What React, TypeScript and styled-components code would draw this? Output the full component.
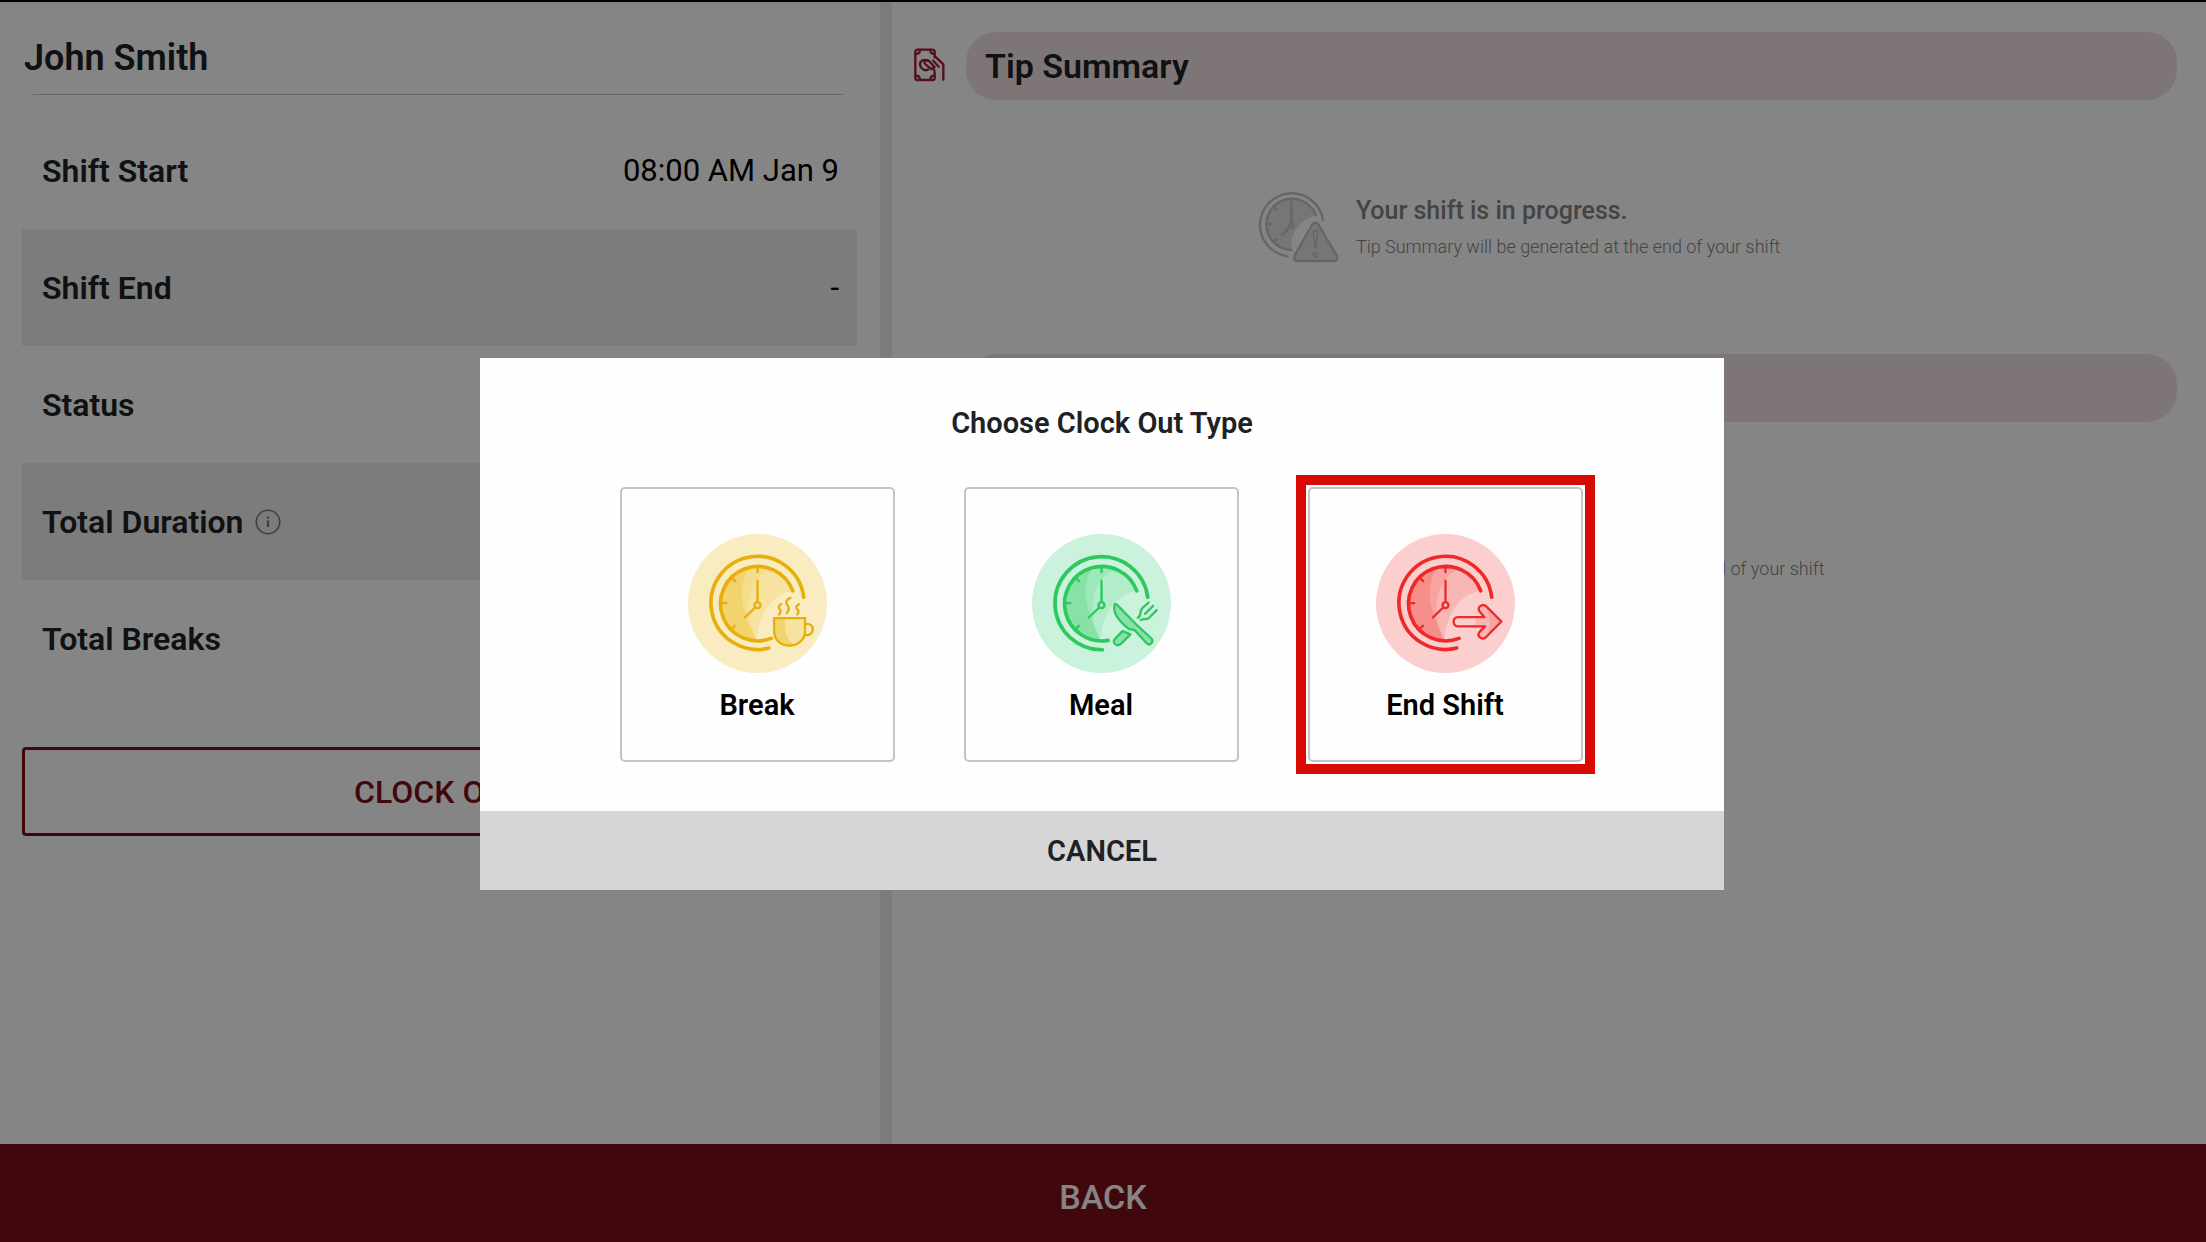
import React from "react";
import styled, { createGlobalStyle } from "styled-components";

const GlobalStyle = createGlobalStyle`
  * { box-sizing: border-box; }
  body { margin: 0; font-family: Roboto, "Liberation Sans", sans-serif; color: #202124; }
  h1, h2, h3, p, dl, dt, dd { margin: 0; }
  button { font-family: inherit; cursor: pointer; }
`;

const maroon = "#7b1117";

const Screen = styled.div`
  display: flex;
  flex-direction: column;
  min-height: 100vh;
  border-top: 2px solid #000;
  background: #fff;
`;

const Panes = styled.main`
  flex: 1;
  display: grid;
  grid-template-columns: 880fr 12px 1314fr;
`;

const Divider = styled.div`
  background: #ededed;
`;

const ShiftPane = styled.section`
  padding: 33px 23px 0 22px;
`;

const EmployeeName = styled.h1`
  font-size: 36px;
  font-weight: 600;
  line-height: 46px;
  padding-left: 2px;
`;

const Rule = styled.hr`
  height: 1px;
  margin: 13px 14px 17px 11px;
  border: 0;
  background: #c4c4c4;
`;

const Details = styled.dl`
  margin-bottom: 50px;
`;

const DetailRow = styled.div<{ $shaded?: boolean }>`
  display: flex;
  align-items: center;
  justify-content: space-between;
  min-height: 117px;
  padding: 0 18px 0 20px;
  font-size: 32px;
  background: ${(p) => (p.$shaded ? "#ededed" : "transparent")};
`;

const DetailLabel = styled.dt`
  display: flex;
  align-items: center;
  gap: 12px;
  font-weight: 600;
`;

const DetailValue = styled.dd`
  color: #000;
  font-size: 31px;
`;

const ClockOutButton = styled.button`
  width: 100%;
  height: 89px;
  border: 3px solid ${maroon};
  border-radius: 4px;
  background: #fff;
  color: ${maroon};
  font-size: 32px;
  font-weight: 500;
`;

const SummaryPane = styled.section`
  display: flex;
  flex-direction: column;
  padding: 30px 29px 0 18px;
`;

const SummaryBlock = styled.article`
  min-height: 322px;
`;

const SummaryHeader = styled.header`
  display: flex;
  align-items: center;
  gap: 16px;
`;

const SummaryTitle = styled.h2`
  flex: 1;
  height: 68px;
  padding: 0 19px;
  border-radius: 30px;
  background: #f2e3e3;
  font-size: 34px;
  font-weight: 600;
  line-height: 68px;
`;

const Notice = styled.div`
  display: flex;
  align-items: center;
  gap: 12px;
  margin: 86px 0 0 27.3%;
  color: #838383;
`;

const NoticeTitle = styled.h3`
  font-size: 25px;
  font-weight: 500;
  line-height: 36px;
`;

const NoticeText = styled.p`
  padding-bottom: 2px;
  font-size: 18px;
  font-weight: 300;
  line-height: 36px;
`;

const BackButton = styled.button`
  height: 98px;
  padding: 8px 0 0;
  border: 0;
  background: ${maroon};
  color: #fff;
  font-size: 34px;
  font-weight: 500;
`;

const Overlay = styled.div`
  position: fixed;
  inset: 0;
  display: flex;
  align-items: center;
  justify-content: center;
  padding: 6px 2px 0 0;
  background: rgba(0, 0, 0, 0.48);
`;

const Dialog = styled.div`
  display: flex;
  flex-direction: column;
  width: 90%;
  max-width: 1244px;
  background: #fefefe;
`;

const DialogTitle = styled.h2`
  padding: 45px 0 44px;
  font-size: 29px;
  font-weight: 600;
  line-height: 40px;
  text-align: center;
`;

const Choices = styled.div`
  display: flex;
  justify-content: center;
  gap: 69px;
  padding: 0 2px 49px 0;
`;

const Choice = styled.button<{ $highlighted?: boolean }>`
  display: flex;
  flex-direction: column;
  align-items: center;
  gap: 12px;
  width: 275px;
  height: 275px;
  padding: 45px 0 0;
  border: 2px solid #c4c4c4;
  border-radius: 5px;
  background: #fefefe;
  color: #000;
  font-size: 29px;
  font-weight: 600;
  line-height: 40px;
  position: relative;

  ${(p) =>
    p.$highlighted &&
    `&::after {
      content: "";
      position: absolute;
      inset: -14px;
      border: 10px solid #d90a04;
    }`}
`;

const CancelButton = styled.button`
  height: 79px;
  border: 0;
  background: #d6d6d6;
  color: #202124;
  font-size: 29px;
  font-weight: 600;
`;

const InfoIcon = () => (
  <svg width="26" height="26" viewBox="0 0 26 26" fill="none" stroke="#7c7c7c" aria-hidden="true">
    <circle cx="13" cy="13" r="11.7" strokeWidth="1.6" />
    <path d="M13 11.5V18" strokeWidth="2.4" />
    <path d="M13 7.4V9.6" strokeWidth="2.4" />
  </svg>
);

const TipIcon = () => (
  <svg width="40" height="40" viewBox="30 48 120 120" fill="none" stroke="#a0202b" strokeWidth="7" strokeLinecap="round" strokeLinejoin="round" aria-hidden="true">
    <path d="M104 82V66Q104 59 97 59H53Q46 59 46 66V143Q46 150 53 150H97Q104 150 104 143V128Q104 120 98 113" />
    <path d="M47 72Q60 72 60 60M91 60Q91 72 103 72M47 137Q60 137 60 149M91 149Q91 137 103 137" />
    <path d="M84 92C66 84 56 98 62 110C66 120 76 122 84 119" />
    <path d="M104 112L88 94C80 86 68 94 76 102L94 118" />
    <path d="M106 80L130 103V149M100 92L116 110" />
  </svg>
);

const WarningClockIcon = () => (
  <svg width="88" height="88" viewBox="18 24 264 264" fill="none" stroke="#c4c4c4" strokeWidth="7" strokeLinecap="round" strokeLinejoin="round" aria-hidden="true">
    <path d="M198 112A77 77 0 1 0 124 216C122 160 150 125 198 112Z" fill="#e2e2e2" stroke="none" />
    <path d="M198 112A77 77 0 1 0 125 216" />
    <path d="M219 126A95 95 0 1 0 113 235" />
    <path d="M124 63V76M124 84V134M119 149L97 170M50 138H62M70 86L80 94M70 191L80 183" />
    <circle cx="124" cy="143" r="6" />
    <path d="M186 141Q196 126 206 141L260 232Q266 249 250 249H144Q128 249 134 232Z" fill="#e2e2e2" />
    <path d="M190 165Q189 158 196 158Q204 158 203 165L198 207Q196 212 194 207Z" strokeWidth="5" />
    <circle cx="196" cy="230" r="6" strokeWidth="5" />
  </svg>
);

type Palette = { line: string; disc: string; light: string; mid: string; deep: string };

const yellow: Palette = { line: "#e8ae0c", disc: "#f9ecc1", light: "#f6e3a0", mid: "#f5de8a", deep: "#f1d46e" };
const green: Palette = { line: "#2dc95f", disc: "#cbf2dc", light: "#b1edc8", mid: "#9de8b8", deep: "#88e2a8" };
const red: Palette = { line: "#ef2929", disc: "#fbcfce", light: "#f8b7b5", mid: "#f7a3a0", deep: "#f68e8a" };

type ClockProps = { palette: Palette; shortArc?: boolean; children: React.ReactNode };

const ClockIcon = ({ palette, shortArc, children }: ClockProps) => (
  <svg width="139" height="139" viewBox="52 38 418 418" fill="none" stroke={palette.line} strokeWidth="7" strokeLinecap="round" strokeLinejoin="round" aria-hidden="true">
    <circle cx="261" cy="247" r="209" fill={palette.disc} stroke="none" />
    <g stroke="none">
      <path d="M367 209A112 112 0 1 0 258 358C262 290 300 220 367 209Z" fill={palette.light} />
      <path d="M300 142A112 112 0 1 0 258 358C225 290 215 190 300 142Z" fill={palette.mid} />
      <path d="M236 138A112 112 0 0 0 258 358C215 270 195 200 236 138Z" fill={palette.deep} />
      <path d="M367 209C300 220 262 290 258 358L330 358Z" fill={palette.disc} />
    </g>
    <g strokeWidth="11">
      <path d={shortArc ? "M367 209A112 112 0 1 0 281 358" : "M367 209A112 112 0 1 0 302 352"} />
      <path d={shortArc ? "M400 228A140 140 0 1 0 264 386" : "M400 228A140 140 0 1 0 295 381"} />
    </g>
    <path d="M261 138V153M261 178V243M254 259L223 289M150 246H167M184 170L194 180M182 324L193 314" />
    <circle cx="261" cy="252" r="9" />
    {children}
  </svg>
);

const BreakIcon = () => (
  <ClockIcon palette={yellow}>
    <path d="M311 291H404V330C404 358 380 374 357 374C333 374 311 358 311 330Z" fill={yellow.light} stroke="none" />
    <path d="M311 291H345C338 325 348 355 372 371C335 382 311 358 311 330Z" fill={yellow.deep} stroke="none" />
    <path d="M311 291H404V330C404 358 380 374 357 374C333 374 311 358 311 330Z" strokeLinejoin="miter" />
    <path d="M406 309C434 302 436 347 403 342" />
    <path d="M332 249C321 257 325 261 329 266C333 272 328 277 326 280M360 230C343 240 346 246 352 253C360 262 352 272 349 276M386 249C373 256 378 262 382 266C388 272 382 278 380 280" />
  </ClockIcon>
);

const MealIcon = () => (
  <ClockIcon palette={green} shortArc>
    <path d="M370 290C382 286 374 270 384 261L403 244M416 254L392 278M427 267L404 290C395 298 388 290 379 297" />
    <path d="M324 330L348 340L321 367C309 379 291 367 301 354Z" fill={green.deep} />
    <path d="M300 252C294 277 320 305 344 324C352 326 360 322 368 335L396 366C405 376 419 364 412 353L374 318C352 298 322 264 308 251C304 247 301 248 300 252Z" fill={green.deep} />
  </ClockIcon>
);

const EndShiftIcon = () => (
  <ClockIcon palette={red}>
    <path d="M299 288H378L363 270C354 256 376 244 386 258L429 301L384 347C372 360 354 346 363 333L380 316H299C281 314 281 290 299 288Z" fill={red.disc} stroke="none" />
    <path d="M350 288H378L363 270C355 256 376 244 386 258L429 301L384 347C372 360 354 346 363 333L380 316H346Q356 302 350 288Z" fill={red.light} stroke="none" />
    <path d="M378 254L429 301L384 347C398 312 396 285 378 254Z" fill={red.mid} stroke="none" />
    <path d="M299 288H378L363 270C354 256 376 244 386 258L429 301L384 347C372 360 354 346 363 333L380 316H299C281 314 281 290 299 288Z" />
  </ClockIcon>
);

const ShiftNotice = ({ summary }: { summary: string }) => (
  <Notice>
    <WarningClockIcon />
    <div>
      <NoticeTitle>Your shift is in progress.</NoticeTitle>
      <NoticeText>{summary} will be generated at the end of your shift</NoticeText>
    </div>
  </Notice>
);

const details = [
  { label: "Shift Start", value: "08:00 AM Jan 9" },
  { label: "Shift End", value: "-" },
  { label: "Status", value: "" },
  { label: "Total Duration", value: "", info: true },
  { label: "Total Breaks", value: "" },
];

const summaries = ["Tip Summary", "Earnings Summary"];

const choices = [
  { label: "Break", Icon: BreakIcon },
  { label: "Meal", Icon: MealIcon },
  { label: "End Shift", Icon: EndShiftIcon, highlighted: true },
];

export default function App() {
  return (
    <>
      <GlobalStyle />
      <Screen>
        <Panes>
          <ShiftPane>
            <EmployeeName>John Smith</EmployeeName>
            <Rule />
            <Details>
              {details.map((row, i) => (
                <DetailRow key={row.label} $shaded={i % 2 === 1}>
                  <DetailLabel>
                    {row.label}
                    {row.info && <InfoIcon />}
                  </DetailLabel>
                  <DetailValue>{row.value}</DetailValue>
                </DetailRow>
              ))}
            </Details>
            <ClockOutButton type="button">CLOCK OUT</ClockOutButton>
          </ShiftPane>
          <Divider />
          <SummaryPane>
            {summaries.map((title) => (
              <SummaryBlock key={title}>
                <SummaryHeader>
                  <TipIcon />
                  <SummaryTitle>{title}</SummaryTitle>
                </SummaryHeader>
                <ShiftNotice summary={title} />
              </SummaryBlock>
            ))}
          </SummaryPane>
        </Panes>
        <BackButton type="button">BACK</BackButton>
      </Screen>
      <Overlay>
        <Dialog role="dialog" aria-modal="true" aria-labelledby="clock-out-title">
          <DialogTitle id="clock-out-title">Choose Clock Out Type</DialogTitle>
          <Choices>
            {choices.map(({ label, Icon, highlighted }) => (
              <Choice key={label} type="button" $highlighted={highlighted}>
                <Icon />
                {label}
              </Choice>
            ))}
          </Choices>
          <CancelButton type="button">CANCEL</CancelButton>
        </Dialog>
      </Overlay>
    </>
  );
}
